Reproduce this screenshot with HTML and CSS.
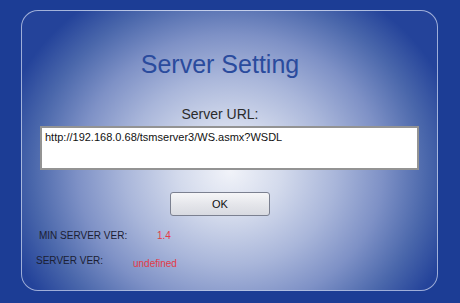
FILE: index.html
```html
<!DOCTYPE html>
<html>
<head>
<meta charset="utf-8">
<link rel="stylesheet" href="styles.css">
</head>
<body>
<div class="panel">
  <h1 class="title">Server Setting</h1>
  <div class="label-url">Server URL:</div>
  <div class="url-box">http://192.168.0.68/tsmserver3/WS.asmx?WSDL</div>
  <button class="ok-btn">OK</button>
  <div class="row row-min">
    <span class="row-label">MIN SERVER VER:</span>
    <span class="row-value">1.4</span>
  </div>
  <div class="row row-ver">
    <span class="row-label">SERVER VER:</span>
    <span class="row-value">undefined</span>
  </div>
</div>
</body>
</html>
```
FILE: styles.css
```css
html, body {
  margin: 0;
  padding: 0;
}
body {
  width: 460px;
  height: 303px;
  background: #1c3d95;
  font-family: "Liberation Sans", Arial, sans-serif;
  padding-top: 10px;
  box-sizing: border-box;
  overflow: hidden;
}
.panel {
  box-sizing: border-box;
  margin-left: 21px;
  width: 417px;
  height: 281px;
  border: 1px solid rgba(225, 232, 250, 0.65);
  border-radius: 17px;
  background: radial-gradient(ellipse 235px 210px at 208px 160px,
    #f1f3f9 0%, #d3daec 22%, #a9b6da 45%, #7e91c6 65%, #4a67ab 84%, #24439a 100%);
  display: flex;
  flex-direction: column;
  padding-top: 38px;
}
.title {
  margin: 0 19px 0 0;
  font-weight: normal;
  font-size: 25px;
  line-height: 30px;
  color: #2a4b9d;
  text-align: center;
}
.label-url {
  margin: 26px 19px 0 0;
  font-size: 14px;
  line-height: 18px;
  color: #2b2b2b;
  text-align: center;
}
.url-box {
  margin: 3px 0 0 18px;
  width: 379px;
  height: 44px;
  box-sizing: border-box;
  background: #fff;
  border: 2px solid #939393;
  padding: 3px 3px;
  font-size: 11px;
  line-height: 13px;
  color: #111;
}
.ok-btn {
  align-self: flex-start;
  margin: 22px 0 0 148px;
  width: 100px;
  height: 24px;
  box-sizing: border-box;
  border: 1px solid #7b8090;
  border-radius: 3px;
  background: linear-gradient(#f6f6f8, #e4e5ea 55%, #d8dae1);
  font-family: "Liberation Sans", Arial, sans-serif;
  font-size: 11px;
  line-height: 22px;
  padding: 0;
  color: #111;
}
.row {
  display: flex;
  align-items: flex-start;
  font-size: 10px;
  line-height: 12px;
}
.row-label {
  color: #1b2033;
}
.row-value {
  color: #e33a47;
}
.row-min {
  margin-top: 14px;
  padding-left: 17px;
}
.row-min .row-label {
  width: 118px;
}
.row-ver {
  margin-top: 13px;
  padding-left: 14px;
}
.row-ver .row-label {
  width: 97px;
}
.row-ver .row-value {
  margin-top: 3px;
}
```
